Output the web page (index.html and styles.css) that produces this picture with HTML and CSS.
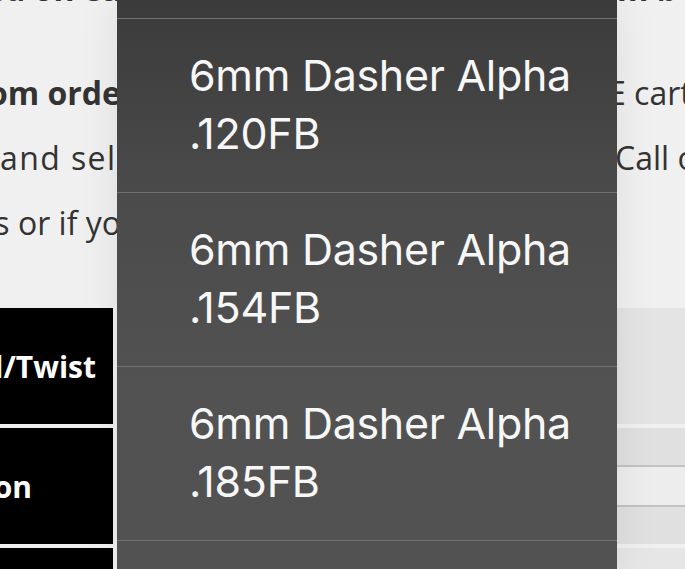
FILE: index.html
```html
<!DOCTYPE html>
<html>
<head>
<meta http-equiv="Content-Type" content="text/html; charset=utf-8" />
  <title>Custom Order</title>
  <link rel="stylesheet" href="styles.css">
</head>
<body>
<div class="page">
  <p class="copy-line copy-top bold">
    <span class="lead">rifle based on ea</span>
    <span class="tail tail-m">m b</span>
  </p>

  <div class="copy">
    <p class="copy-line">
      <span class="lead bold">Custom orde</span>
      <span class="tail tail-e">E cartridges</span>
    </p>
    <p class="copy-line">
      <span class="lead start">and sel</span>
      <span class="tail tail-c">Call or email</span>
    </p>
    <p class="copy-line">
      <span class="lead">questions or if yo</span>
      <span class="tail"></span>
    </p>
  </div>

  <div class="specs">
    <div class="spec-row">
      <div class="spec-name">Barrel/Twist</div>
      <div class="spec-value"></div>
    </div>
    <div class="spec-row">
      <div class="spec-name short">Configuration</div>
      <div class="spec-value options">
        <div class="option"></div>
        <div class="option alt"></div>
        <div class="option"></div>
      </div>
    </div>
    <div class="spec-row">
      <div class="spec-name">Stock</div>
      <div class="spec-value last"></div>
    </div>
  </div>
</div>

<!-- select picker opened over the page -->
<div class="picker">
  <ul class="picker-list">
    <li>6mm Dasher<br>.100FB</li>
    <li>6mm Dasher Alpha<br>.120FB</li>
    <li>6mm Dasher Alpha<br>.154FB</li>
    <li>6mm Dasher Alpha<br>.185FB</li>
    <li>6mm Dasher Alpha<br>.200FB</li>
  </ul>
</div>
</body>
</html>
```

FILE: styles.css
```css
* {
  box-sizing: border-box;
  margin: 0;
  padding: 0;
}

html, body {
  height: 100%;
  overflow: hidden;
}

body {
  position: relative;
  background-color: #f0f0f0;
  font-family: "Open Sans", "Liberation Sans", sans-serif;
  color: #333;
}

.page {
  width: 100%;
}

/* text lines, cut by the picker in the middle */
.copy-line {
  display: flex;
  height: 65px;
  line-height: 65px;
  font-size: 32px;
  white-space: nowrap;
}

.copy-line .lead {
  flex: 0 0 121px;
  min-width: 0;
  display: flex;
  justify-content: flex-end;
}

.copy-line .lead.start {
  justify-content: flex-start;
  letter-spacing: 1.4px;
}

.copy-line .tail {
  margin-left: 488px;
}

.copy-line .tail-m {
  margin-left: 496px;
}

.copy-line .tail-e {
  margin-left: 487px;
}

.copy-line .tail-c {
  margin-left: 494px;
}

.bold {
  font-weight: 700;
  color: #333;
}

.copy-top {
  margin-top: -44px;
}

.copy {
  margin-top: 39px;
}

/* spec table */
.specs {
  margin-top: 53px;
}

.spec-row {
  display: grid;
  grid-template-columns: 113px 1fr;
  gap: 4px;
  height: 116px;
  margin-bottom: 4px;
}

.spec-name {
  display: flex;
  justify-content: flex-end;
  align-items: center;
  padding-right: 17px;
  background-color: #000;
  color: #fff;
  font-size: 30px;
  font-weight: 700;
  white-space: nowrap;
  overflow: hidden;
}

.spec-name.short {
  padding-right: 0;
  justify-content: flex-start;
  text-indent: -175px;
}

.spec-value {
  background-color: #e4e4e4;
}

.spec-value.last {
  background-color: #e6e6e6;
}

.options {
  display: flex;
  flex-direction: column;
  background-color: transparent;
}

.option {
  flex: 1;
  background-color: #e0e0e0;
  border-bottom: 2px solid #c3c3c3;
}

.option.alt {
  background-color: #ededed;
}

.option:last-child {
  border-bottom: none;
}

/* picker */
.picker {
  position: absolute;
  top: 0;
  left: 117px;
  width: 500px;
  height: 100%;
  overflow: hidden;
  background: linear-gradient(180deg, #3b3b3b 0, #4b4b4b 35%, #525252 70%, #525252 100%);
  box-shadow: 0 0 40px rgba(0, 0, 0, 0.08);
}

.picker-list {
  list-style: none;
  margin-top: -156px;
}

.picker-list li {
  height: 174px;
  padding: 27px 20px 30px 72px;
  border-top: 1px solid #727272;
  font-family: "Inter", "Roboto", sans-serif;
  font-size: 43px;
  line-height: 58px;
  letter-spacing: -0.3px;
  color: #f7f7f7;
}
```
